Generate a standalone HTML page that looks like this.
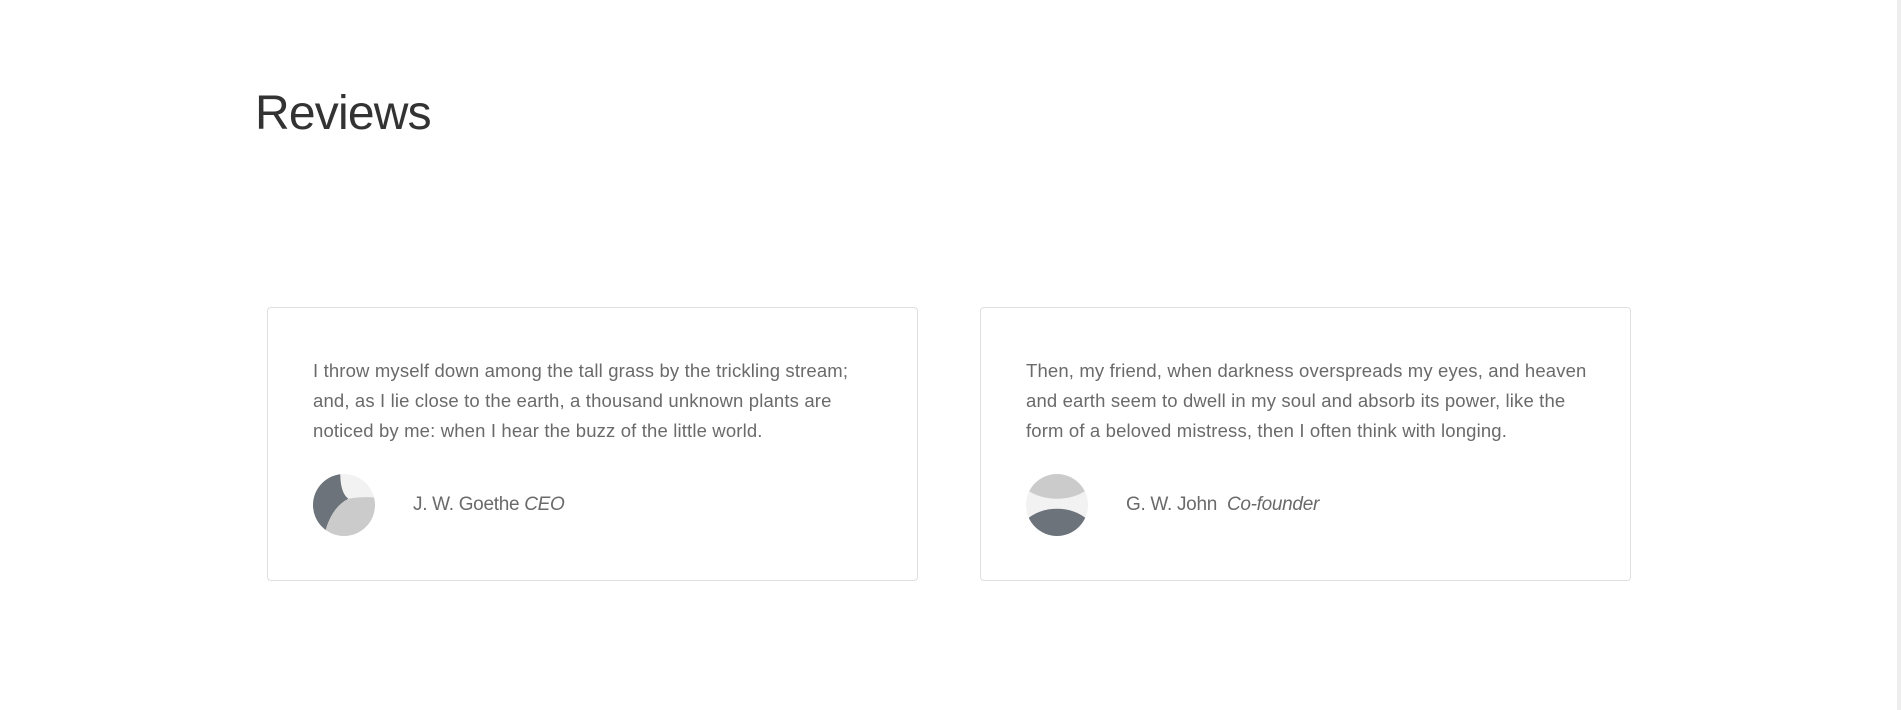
<!DOCTYPE html>
<html><head><meta charset="utf-8"><style>
html,body{margin:0;padding:0;background:#fff;width:1901px;height:710px;overflow:hidden;font-family:"Liberation Sans",sans-serif;}
h1{position:absolute;left:255px;top:86px;margin:0;font-weight:300;font-size:48px;color:#333;letter-spacing:-0.8px;}
.card{position:absolute;top:307px;width:651px;height:274px;border:1px solid #dfdfdf;border-radius:4px;box-sizing:border-box;}
.q{position:absolute;left:45px;top:48px;white-space:nowrap;font-size:18.5px;line-height:30px;color:#6a6a6a;letter-spacing:0.15px;}
.av{position:absolute;left:45px;top:166px;width:62px;height:62px;}
.nm{position:absolute;left:145px;top:186px;font-size:19px;color:#6a6a6a;letter-spacing:-0.3px;}
.sb{position:absolute;right:0;top:0;width:4px;height:710px;background:#eee;}
</style></head><body>
<h1>Reviews</h1>
<div class="card" style="left:267px">
<div class="q">I throw myself down among the tall grass by the trickling stream;<br>and, as I lie close to the earth, a thousand unknown plants are<br>noticed by me: when I hear the buzz of the little world.</div>
<svg class="av" viewBox="0 0 100 100"><defs><clipPath id="c1"><circle cx="50" cy="50" r="50"/></clipPath></defs><g clip-path="url(#c1)"><rect width="100" height="100" fill="#f2f2f2"/><path d="M0 0 L44 0 Q44 30 57 40 Q28 55 18 100 L0 100Z" fill="#6c737b"/><path d="M57 40 Q80 36 100 38 L100 100 L18 100 Q28 55 57 40Z" fill="#cbcbcb"/></g></svg>
<div class="nm">J. W. Goethe <i>CEO</i></div>
</div>
<div class="card" style="left:980px">
<div class="q">Then, my friend, when darkness overspreads my eyes, and heaven<br>and earth seem to dwell in my soul and absorb its power, like the<br>form of a beloved mistress, then I often think with longing.</div>
<svg class="av" viewBox="0 0 100 100"><defs><clipPath id="c2"><circle cx="50" cy="50" r="50"/></clipPath></defs><g clip-path="url(#c2)"><rect width="100" height="100" fill="#f2f2f2"/><ellipse cx="50" cy="-12" rx="70" ry="52" fill="#cbcbcb"/><ellipse cx="50" cy="116" rx="70" ry="60" fill="#6c737b"/></g></svg>
<div class="nm">G. W. John&nbsp; <i>Co-founder</i></div>
</div>
<div class="sb"></div>
</body></html>
